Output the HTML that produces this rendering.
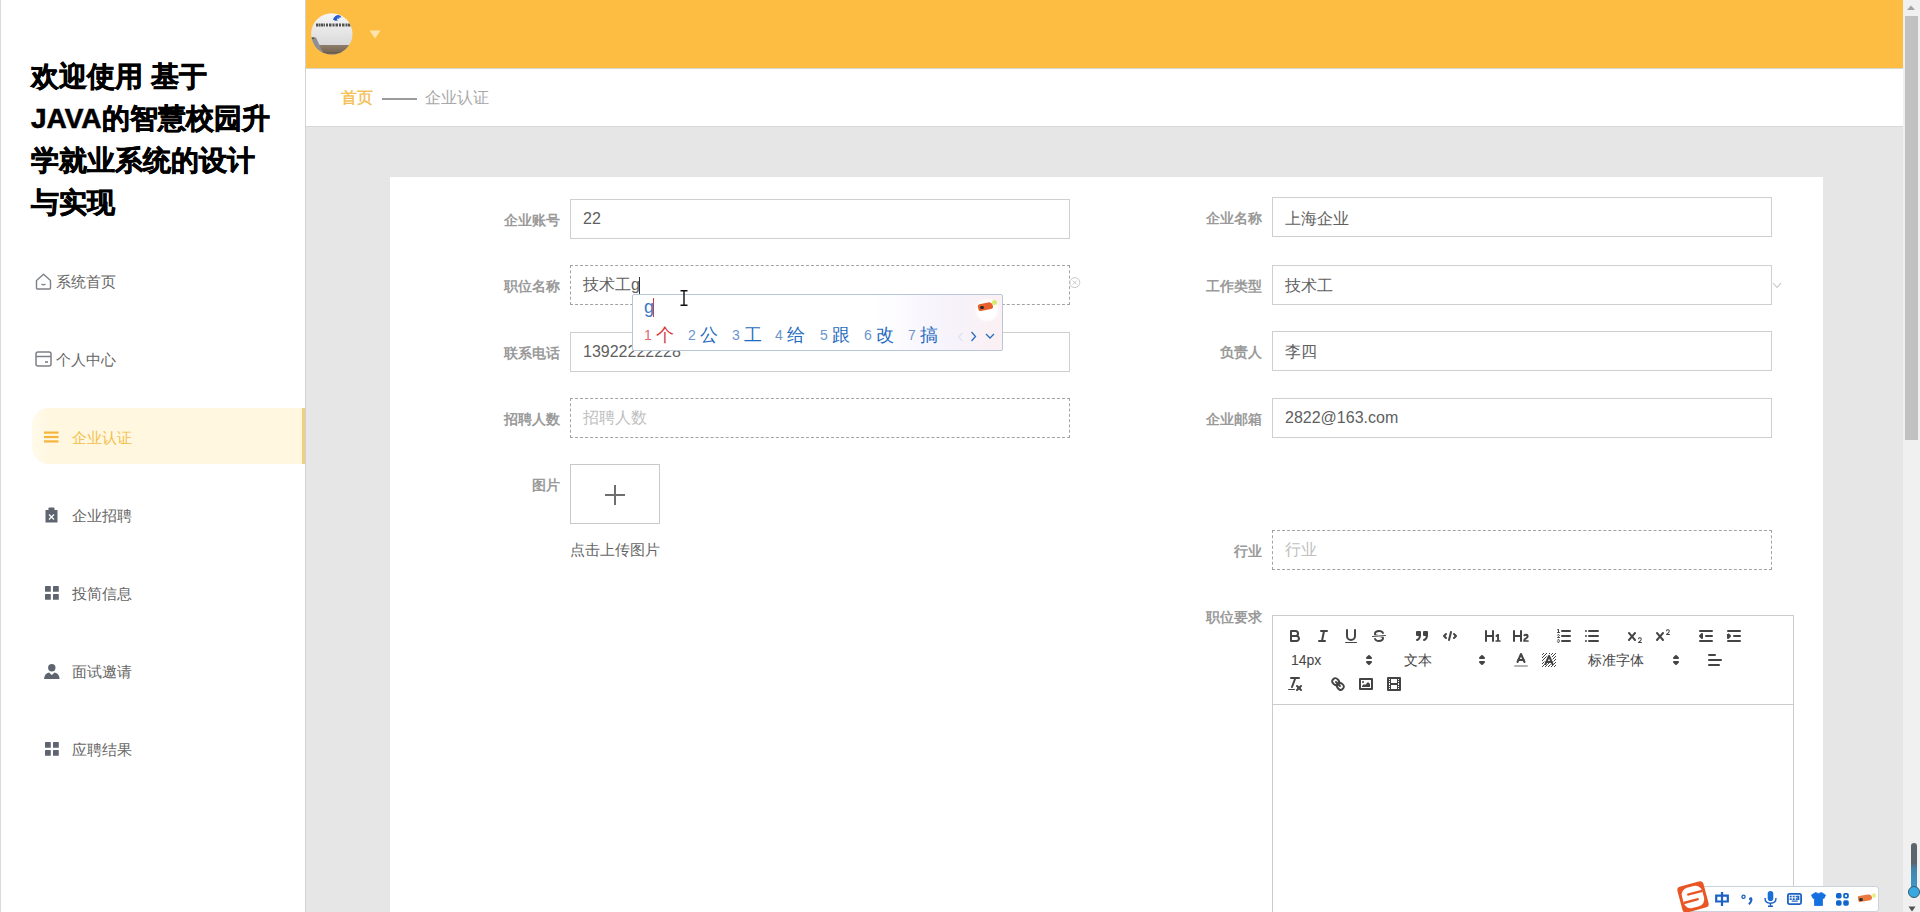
<!DOCTYPE html>
<html><head><meta charset="utf-8">
<style>
*{box-sizing:border-box;margin:0;padding:0}
html,body{width:1920px;height:912px;overflow:hidden;background:#fff;font-family:"Liberation Sans",sans-serif}
.abs{position:absolute}
#lb{left:0;top:0;width:1px;height:912px;background:#d9d9d9}
#side{left:1px;top:0;width:305px;height:912px;background:#fff;border-right:1px solid #d2d2d2}
#title{left:31px;top:55.5px;width:260px;font-size:28px;font-weight:bold;line-height:42px;color:#000;-webkit-text-stroke:0.6px #000}
.mi{position:absolute;left:32px;width:273px;height:57px;font-size:15px;color:#666}
.mi .t{position:absolute;top:0;line-height:57px}
#hdr{left:306px;top:0;width:1597px;height:69px;background:#fcbd42;border-bottom:1px solid #d9d6d0}
#bc{left:306px;top:69px;width:1597px;height:58px;background:#fff;border-bottom:1px solid #d8d8d8}
#main{left:306px;top:127px;width:1597px;height:785px;background:#e6e6e6}
#card{left:390px;top:177px;width:1433px;height:735px;background:#fff}
#sb{left:1903px;top:0;width:17px;height:912px;background:#f0f0f0}
.mt{position:absolute;font-size:15px;line-height:17px;color:#666;white-space:nowrap}
.mt.act{color:#f4bf4e}
#act{left:32px;top:408px;width:273px;height:56px;background:linear-gradient(90deg,#fffaeb 0px,#fff7df 18px);border-radius:17px 0 0 17px;border-right:3px solid #f0d07e}
#av{left:311px;top:13px;width:42px;height:42px;border-radius:50%;overflow:hidden}
.lab{position:absolute;width:100px;text-align:right;font-size:14px;line-height:16px;font-weight:bold;color:#9a9a9a;white-space:nowrap}
.inp{position:absolute;width:500px;height:40px;border:1px solid #cfcfcf;background:#fff}
.inp.dash{border:1px dashed #a3a3a3}
.inp span{position:absolute;left:12px;font-size:16px;line-height:18px;color:#606060;white-space:nowrap}
.inp span.ph{color:#c0c0c0}
#ed{left:1272px;top:615px;width:522px;height:310px;border:1px solid #ccc;background:#fff}
#ime{left:632px;top:294px;width:371px;height:57px;border:1px solid #b8c6da;border-radius:2px;background:linear-gradient(90deg,#fff 0%,#fff 65%,#f6f3fc 85%,#fbf0f2 100%);overflow:hidden}
.cand{white-space:nowrap;line-height:20px}
.cand i{font-style:normal;font-size:14px;position:relative;top:-1px;color:#6a95cc;display:inline-block;width:12px}
.cand b{font-weight:normal;font-size:18px;color:#1f6bc0}
.pk{position:absolute;font-size:14px;line-height:22px;color:#444;white-space:nowrap}
#sogou{left:1690px;top:886px;width:189px;height:26px;border:1px solid #c9d2dd;border-radius:0 3px 3px 0;background:#fff}
</style></head><body>
<div id="lb" class="abs"></div>
<div id="side" class="abs"></div>
<div id="title" class="abs">欢迎使用 基于<br>JAVA的智慧校园升<br>学就业系统的设计<br>与实现</div>

<div class="mt" style="left:56px;top:273px">系统首页</div>
<svg class="abs" style="left:35px;top:273px" width="17" height="17" viewBox="0 0 17 17"><path d="M1.5 7.5 L8.5 1.2 L15.5 7.5 V15 Q15.5 16 14.5 16 H2.5 Q1.5 16 1.5 15 Z" fill="none" stroke="#7d8087" stroke-width="1.4" stroke-linejoin="round"/><path d="M6.5 11 Q8.5 12.8 10.5 11" fill="none" stroke="#7d8087" stroke-width="1.3"/></svg>
<div class="mt" style="left:56px;top:351px">个人中心</div>
<svg class="abs" style="left:35px;top:351px" width="17" height="16" viewBox="0 0 17 16"><rect x="1" y="1" width="15" height="14" rx="2" fill="none" stroke="#7d8087" stroke-width="1.5"/><path d="M1 5.5 H16" stroke="#7d8087" stroke-width="1.5"/><path d="M10 11 H13" stroke="#7d8087" stroke-width="1.6"/></svg>
<div id="act" class="abs"></div>
<svg class="abs" style="left:44px;top:431px" width="15" height="12" viewBox="0 0 15 12"><rect x="0" y="0.5" width="14.5" height="2.2" fill="#f5b43c"/><rect x="0" y="4.9" width="14.5" height="2.2" fill="#f5b43c"/><rect x="0" y="9.3" width="14.5" height="2.2" fill="#f5b43c"/></svg>
<div class="mt act" style="left:72px;top:429px">企业认证</div>
<svg class="abs" style="left:45px;top:507px" width="13" height="16" viewBox="0 0 13 16"><path d="M0.5 3 H12.5 V15.5 H0.5 Z" fill="#5f6570"/><rect x="3.5" y="0.5" width="6" height="3" rx="0.8" fill="#5f6570"/><path d="M4 7.5 L9 12.5 M9 7.5 L4 12.5" stroke="#fff" stroke-width="1.2"/></svg>
<div class="mt" style="left:72px;top:507px">企业招聘</div>
<svg class="abs grid" style="left:45px;top:586px" width="14" height="14" viewBox="0 0 14 14"><rect x="0" y="0" width="5.8" height="5.8" rx="0.6" fill="#5f6570"/><rect x="8" y="0" width="5.8" height="5.8" rx="0.6" fill="#5f6570"/><rect x="0" y="8" width="5.8" height="5.8" rx="0.6" fill="#5f6570"/><rect x="8" y="8" width="5.8" height="5.8" rx="0.6" fill="#5f6570"/></svg>
<div class="mt" style="left:72px;top:585px">投简信息</div>
<svg class="abs" style="left:44px;top:664px" width="16" height="15" viewBox="0 0 16 15"><circle cx="7.8" cy="3.7" r="3.7" fill="#5f6570"/><path d="M0 15 Q0.5 9.5 5 8.6 L7.8 11 L10.6 8.6 Q15.2 9.5 15.6 15 Z" fill="#5f6570"/></svg>
<div class="mt" style="left:72px;top:663px">面试邀请</div>
<svg class="abs grid" style="left:45px;top:742px" width="14" height="14" viewBox="0 0 14 14"><rect x="0" y="0" width="5.8" height="5.8" rx="0.6" fill="#5f6570"/><rect x="8" y="0" width="5.8" height="5.8" rx="0.6" fill="#5f6570"/><rect x="0" y="8" width="5.8" height="5.8" rx="0.6" fill="#5f6570"/><rect x="8" y="8" width="5.8" height="5.8" rx="0.6" fill="#5f6570"/></svg>
<div class="mt" style="left:72px;top:741px">应聘结果</div>

<div id="hdr" class="abs"></div>
<svg class="abs" style="left:311px;top:13px" width="42" height="42" viewBox="0 0 42 42"><defs><clipPath id="avc"><circle cx="20.8" cy="20.9" r="20.7"/></clipPath><linearGradient id="avg" x1="0" y1="0" x2="0" y2="1"><stop offset="0" stop-color="#f6f6f6"/><stop offset="0.5" stop-color="#e4e4e4"/><stop offset="0.75" stop-color="#d9d9db"/></linearGradient><linearGradient id="avb" x1="0" y1="0" x2="0" y2="1"><stop offset="0" stop-color="#8e7d69"/><stop offset="1" stop-color="#6f5f4d"/></linearGradient></defs><g clip-path="url(#avc)"><rect width="42" height="42" fill="url(#avg)"/><rect x="0" y="32" width="42" height="10" fill="url(#avb)"/><rect x="0" y="39" width="42" height="1" fill="#5f5040" opacity=".5"/><path d="M0 25 L5 24.5 L13 42 L0 42 Z" fill="#8d8f93"/><path d="M0 24.5 L4 24.5 L2 26 Z" fill="#333"/><g fill="#2c2c2c" opacity=".8"><rect x="5" y="10.5" width="2" height="3"/><rect x="7.5" y="10.5" width="2" height="3"/><rect x="10" y="10.5" width="2" height="3"/><rect x="12.5" y="10.5" width="1.5" height="3"/><rect x="15" y="10.5" width="2" height="3"/><rect x="18" y="10.5" width="2.5" height="3"/><rect x="21.5" y="10.5" width="2" height="3"/><rect x="24.5" y="10.5" width="2.5" height="3"/><rect x="28" y="10.5" width="2" height="3"/><rect x="31" y="10.5" width="2.5" height="3"/><rect x="34.5" y="10.5" width="2" height="3"/><rect x="37" y="10.5" width="2.5" height="3"/></g><path d="M22 6.5 Q23.5 2.5 27 2 Q30 2.3 30.5 4.5 Q28 3.5 26 5.5 Q25.5 7.5 27.5 7.5 L24 7.8 Z" fill="#2457c8"/><circle cx="27.3" cy="4.6" r="1.3" fill="#3a70e0"/></g></svg><svg class="abs" style="left:369px;top:30px" width="12" height="9" viewBox="0 0 12 9"><path d="M0.5 0.5 H11.5 L6 8.5 Z" fill="#fde3ae"/></svg>
<div id="bc" class="abs"></div>
<div class="abs" style="left:341px;top:89px;font-size:16px;line-height:18px;color:#f4bd4e;-webkit-text-stroke:0.35px #f4bd4e">首页</div>
<div class="abs" style="left:382px;top:98px;width:35px;height:2px;background:#9b9b9b"></div>
<div class="abs" style="left:425px;top:89px;font-size:16px;line-height:18px;color:#a8a8a8">企业认证</div>

<div id="main" class="abs"></div>

<div id="card" class="abs"></div>
<!-- left column -->
<div class="lab" style="left:460px;top:212px">企业账号</div>
<div class="inp" style="left:570px;top:199px"><span style="top:10px">22</span></div>
<div class="lab" style="left:460px;top:278px">职位名称</div>
<div class="inp dash" style="left:570px;top:265px"><span style="top:10px">技术工g</span></div>
<div class="abs" style="left:639px;top:277px;width:1px;height:17px;background:#333"></div>
<svg class="abs" style="left:1069px;top:276px" width="12" height="13" viewBox="0 0 12 13"><circle cx="5.8" cy="6.6" r="5" fill="none" stroke="#c8c8c8" stroke-width="1"/><path d="M3.9 4.7 L7.7 8.5 M7.7 4.7 L3.9 8.5" stroke="#c8c8c8" stroke-width="1"/></svg>
<div class="lab" style="left:460px;top:345px">联系电话</div>
<div class="inp" style="left:570px;top:332px"><span style="top:10px">13922222228</span></div>
<div class="lab" style="left:460px;top:411px">招聘人数</div>
<div class="inp dash" style="left:570px;top:398px"><span class="ph" style="top:10px">招聘人数</span></div>
<div class="lab" style="left:460px;top:477px">图片</div>
<div class="abs" style="left:570px;top:464px;width:90px;height:60px;border:1px solid #c9c9c9;background:#fff"></div>
<div class="abs" style="left:605px;top:494px;width:20px;height:2px;background:#6f6f6f"></div>
<div class="abs" style="left:614px;top:485px;width:2px;height:20px;background:#6f6f6f"></div>
<div class="abs" style="left:570px;top:541px;font-size:15px;line-height:17px;color:#666">点击上传图片</div>

<div id="ime" class="abs">
 <div class="abs" style="left:11px;top:2px;font-size:18px;line-height:20px;color:#3a78c9">g</div>
 <div class="abs" style="left:20px;top:3px;width:1px;height:19px;background:#d9383a"></div>
 <div class="abs cand" style="left:11px;top:30px"><i style="color:#e06a6a">1</i><b style="color:#d9383a">个</b></div>
 <div class="abs cand" style="left:55px;top:30px"><i>2</i><b>公</b></div>
 <div class="abs cand" style="left:99px;top:30px"><i>3</i><b>工</b></div>
 <div class="abs cand" style="left:142px;top:30px"><i>4</i><b>给</b></div>
 <div class="abs cand" style="left:187px;top:30px"><i>5</i><b>跟</b></div>
 <div class="abs cand" style="left:231px;top:30px"><i>6</i><b>改</b></div>
 <div class="abs cand" style="left:275px;top:30px"><i>7</i><b>搞</b></div>
 <svg class="abs" style="left:324px;top:37px" width="7" height="10" viewBox="0 0 7 10"><path d="M5.5 1 L1.5 5 L5.5 9" fill="none" stroke="#dfe4ec" stroke-width="1.2"/></svg>
 <svg class="abs" style="left:337px;top:36px" width="7" height="11" viewBox="0 0 7 11"><path d="M1.5 1 L5.5 5.5 L1.5 10" fill="none" stroke="#2b6cc0" stroke-width="1.3"/></svg>
 <svg class="abs" style="left:352px;top:38px" width="10" height="7" viewBox="0 0 10 7"><path d="M1 1 L5 5 L9 1" fill="none" stroke="#2b6cc0" stroke-width="1.3"/></svg>
 <div class="abs" style="left:340px;top:3px;width:28px;height:24px;border-radius:50%;background:radial-gradient(circle,#fff 50%,rgba(255,255,255,0) 70%)"></div>
 <div class="abs" style="left:345px;top:8px;width:15px;height:7px;background:#e8602c;border-radius:3px 6px 4px 3px;transform:rotate(-12deg)"></div>
 <div class="abs" style="left:347px;top:11px;width:4px;height:3px;background:#2a2a2a;border-radius:2px"></div>
 <div class="abs" style="left:359px;top:5px;width:5px;height:5px;background:#d6ea6c;border-radius:50%"></div>
</div>
<svg class="abs" style="left:680px;top:290px" width="8" height="16" viewBox="0 0 8 16"><path d="M0.5 0.8 H7.5 M4 0.8 V15.2 M0.5 15.2 H7.5" fill="none" stroke="#111" stroke-width="1.4"/></svg>
<!-- right column -->
<div class="lab" style="left:1162px;top:210px">企业名称</div>
<div class="inp" style="left:1272px;top:197px"><span style="top:12px">上海企业</span></div>
<div class="lab" style="left:1162px;top:278px">工作类型</div>
<div class="inp" style="left:1272px;top:265px"><span style="top:11px">技术工</span></div>
<svg class="abs" style="left:1772px;top:282px" width="10" height="7" viewBox="0 0 10 7"><path d="M1 1 L5 5.5 L9 1" fill="none" stroke="#c4c4c4" stroke-width="1.1"/></svg>
<div class="lab" style="left:1162px;top:344px">负责人</div>
<div class="inp" style="left:1272px;top:331px"><span style="top:11px">李四</span></div>
<div class="lab" style="left:1162px;top:411px">企业邮箱</div>
<div class="inp" style="left:1272px;top:398px"><span style="top:10px">2822@163.com</span></div>
<div class="lab" style="left:1162px;top:543px">行业</div>
<div class="inp dash" style="left:1272px;top:530px"><span class="ph" style="top:10px">行业</span></div>
<div class="lab" style="left:1162px;top:609px">职位要求</div>
<div id="ed" class="abs"></div>
<svg class="abs" style="left:1286px;top:627px" width="18" height="18" viewBox="0 0 18 18"><path fill="none" stroke="#444" stroke-width="2" stroke-linecap="round" stroke-linejoin="round" d="M5,4H9.5A2.5,2.5,0,0,1,12,6.5v0A2.5,2.5,0,0,1,9.5,9H5A0,0,0,0,1,5,9V4A0,0,0,0,1,5,4Z"/><path fill="none" stroke="#444" stroke-width="2" stroke-linecap="round" stroke-linejoin="round" d="M5,9h5.5A2.5,2.5,0,0,1,13,11.5v0A2.5,2.5,0,0,1,10.5,14H5a0,0,0,0,1,0,0V9A0,0,0,0,1,5,9Z"/></svg>
<svg class="abs" style="left:1314px;top:627px" width="18" height="18" viewBox="0 0 18 18"><line fill="none" stroke="#444" stroke-width="2" stroke-linecap="round" stroke-linejoin="round" x1="7" x2="13" y1="4" y2="4"/><line fill="none" stroke="#444" stroke-width="2" stroke-linecap="round" stroke-linejoin="round" x1="5" x2="11" y1="14" y2="14"/><line fill="none" stroke="#444" stroke-width="2" stroke-linecap="round" stroke-linejoin="round" x1="8" x2="10" y1="14" y2="4"/></svg>
<svg class="abs" style="left:1342px;top:627px" width="18" height="18" viewBox="0 0 18 18"><path fill="none" stroke="#444" stroke-width="2" stroke-linecap="round" stroke-linejoin="round" d="M5,3V9a4.012,4.012,0,0,0,4,4H9a4.012,4.012,0,0,0,4-4V3"/><rect fill="#444" height="1" rx="0.5" ry="0.5" width="12" x="3" y="15"/></svg>
<svg class="abs" style="left:1370px;top:627px" width="18" height="18" viewBox="0 0 18 18"><line fill="none" stroke="#444" stroke-width="1" stroke-linecap="round" stroke-linejoin="round" x1="15.5" x2="2.5" y1="8.5" y2="9.5"/><path fill="#444" d="M9.007,8C6.542,7.791,6,7.519,6,6.5,6,5.792,7.283,5,9,5c1.571,0,2.765.679,2.969,1.309a1,1,0,0,0,1.9-.617C13.356,4.106,11.354,3,9,3,6.2,3,4,4.538,4,6.5a3.2,3.2,0,0,0,.5,1.843Z"/><path fill="#444" d="M8.984,10C11.457,10.208,12,10.479,12,11.5c0,0.708-1.283,1.5-3,1.5-1.571,0-2.765-.679-2.969-1.309a1,1,0,1,0-1.9.617C4.644,13.894,6.646,15,9,15c2.8,0,5-1.538,5-3.5a3.2,3.2,0,0,0-.5-1.843Z"/></svg>
<svg class="abs" style="left:1413px;top:627px" width="18" height="18" viewBox="0 0 18 18"><rect fill="#444" stroke="#444" stroke-width="2" stroke-linejoin="round" height="3" width="3" x="4" y="5"/><rect fill="#444" stroke="#444" stroke-width="2" stroke-linejoin="round" height="3" width="3" x="11" y="5"/><path fill="none" stroke="#444" stroke-width="2" stroke-linecap="round" d="M7,8c0,4.031-3,5-3,5"/><path fill="none" stroke="#444" stroke-width="2" stroke-linecap="round" d="M14,8c0,4.031-3,5-3,5"/></svg>
<svg class="abs" style="left:1441px;top:627px" width="18" height="18" viewBox="0 0 18 18"><polyline fill="none" stroke="#444" stroke-width="2" stroke-linecap="round" stroke-linejoin="round" points="5 7 3 9 5 11"/><polyline fill="none" stroke="#444" stroke-width="2" stroke-linecap="round" stroke-linejoin="round" points="13 7 15 9 13 11"/><line fill="none" stroke="#444" stroke-width="2" stroke-linecap="round" stroke-linejoin="round" x1="10" x2="8" y1="5" y2="13"/></svg>
<svg class="abs" style="left:1484px;top:627px" width="18" height="18" viewBox="0 0 18 18"><path fill="#444" d="M10,4V14a1,1,0,0,1-2,0V10H3v4a1,1,0,0,1-2,0V4A1,1,0,0,1,3,4V8H8V4a1,1,0,0,1,2,0Zm6.06787,9.209H14.98975V7.59863a.54085.54085,0,0,0-.605-.60547h-.62744a1.01119,1.01119,0,0,0-.748.29688L11.645,8.56641a.5435.5435,0,0,0-.022.8584l.28613.30762a.53861.53861,0,0,0,.84717.0332l.09912-.08789a1.2137,1.2137,0,0,0,.2417-.35254h.02246s-.01123.30859-.01123.60547V13.209H12.041a.54085.54085,0,0,0-.605.60547v.43945a.54085.54085,0,0,0,.605.60547h4.02686a.54085.54085,0,0,0,.605-.60547v-.43945A.54085.54085,0,0,0,16.06787,13.209Z"/></svg>
<svg class="abs" style="left:1512px;top:627px" width="18" height="18" viewBox="0 0 18 18"><path fill="#444" d="M16.73975,13.81445v.43945a.54085.54085,0,0,1-.605.60547H11.855a.58392.58392,0,0,1-.64893-.60547V14.0127c0-2.90527,3.39941-3.42187,3.39941-4.55469a.77675.77675,0,0,0-.84717-.78125,1.17684,1.17684,0,0,0-.83594.38477c-.2749.26367-.561.374-.85791.13184l-.4292-.34082c-.30811-.24219-.38525-.51758-.1543-.81445a2.97155,2.97155,0,0,1,2.45361-1.17676,2.45393,2.45393,0,0,1,2.68408,2.40918c0,2.45312-3.1792,2.92676-3.27832,3.93848h2.79443A.54085.54085,0,0,1,16.73975,13.81445ZM9,3A.99974.99974,0,0,0,8,4V8H3V4A1,1,0,0,0,1,4V14a1,1,0,0,0,2,0V10H8v4a1,1,0,0,0,2,0V4A.99974.99974,0,0,0,9,3Z"/></svg>
<svg class="abs" style="left:1555px;top:627px" width="18" height="18" viewBox="0 0 18 18"><line fill="none" stroke="#444" stroke-width="2" stroke-linecap="round" stroke-linejoin="round" x1="7" x2="15" y1="4" y2="4"/><line fill="none" stroke="#444" stroke-width="2" stroke-linecap="round" stroke-linejoin="round" x1="7" x2="15" y1="9" y2="9"/><line fill="none" stroke="#444" stroke-width="2" stroke-linecap="round" stroke-linejoin="round" x1="7" x2="15" y1="14" y2="14"/><line fill="none" stroke="#444" stroke-width="1" stroke-linecap="round" stroke-linejoin="round" x1="2.5" x2="4.5" y1="5.5" y2="5.5"/><path fill="#444" d="M3.5,6A0.5,0.5,0,0,1,3,5.5V3.085l-0.276.138A0.5,0.5,0,0,1,2.053,3c-0.124-.247-0.023-0.324.224-0.447l1-.5A0.5,0.5,0,0,1,4,2.5v3A0.5,0.5,0,0,1,3.5,6Z"/><path fill="none" stroke="#444" stroke-width="1" stroke-linecap="round" stroke-linejoin="round" d="M4.5,10.5h-2c0-.234,1.85-1.076,1.85-2.234A0.959,0.959,0,0,0,2.5,8.156"/><path fill="none" stroke="#444" stroke-width="1" stroke-linecap="round" stroke-linejoin="round" d="M2.5,14.846a0.959,0.959,0,0,0,1.85-.109A0.7,0.7,0,0,0,3.75,14a0.688,0.688,0,0,0,.6-0.736,0.959,0.959,0,0,0-1.85-.109"/></svg>
<svg class="abs" style="left:1583px;top:627px" width="18" height="18" viewBox="0 0 18 18"><line fill="none" stroke="#444" stroke-width="2" stroke-linecap="round" stroke-linejoin="round" x1="6" x2="15" y1="4" y2="4"/><line fill="none" stroke="#444" stroke-width="2" stroke-linecap="round" stroke-linejoin="round" x1="6" x2="15" y1="9" y2="9"/><line fill="none" stroke="#444" stroke-width="2" stroke-linecap="round" stroke-linejoin="round" x1="6" x2="15" y1="14" y2="14"/><line fill="none" stroke="#444" stroke-width="2" stroke-linecap="round" stroke-linejoin="round" x1="3" x2="3" y1="4" y2="4"/><line fill="none" stroke="#444" stroke-width="2" stroke-linecap="round" stroke-linejoin="round" x1="3" x2="3" y1="9" y2="9"/><line fill="none" stroke="#444" stroke-width="2" stroke-linecap="round" stroke-linejoin="round" x1="3" x2="3" y1="14" y2="14"/></svg>
<svg class="abs" style="left:1626px;top:627px" width="18" height="18" viewBox="0 0 18 18"><path fill="#444" d="M15.5,15H13.861a3.858,3.858,0,0,0,1.914-2.975,1.8,1.8,0,0,0-1.6-1.751A1.921,1.921,0,0,0,12.021,11.7a0.50013,0.50013,0,1,0,.957.291h0a0.914,0.914,0,0,1,1.053-.725,0.81,0.81,0,0,1,.744.762c0,1.076-1.16971,1.86982-1.93971,2.43082A1.45639,1.45639,0,0,0,12,15.5a0.5,0.5,0,0,0,.5.5h3A0.5,0.5,0,0,0,15.5,15Z"/><path fill="#444" d="M9.65,5.241a1,1,0,0,0-1.409.108L6,7.964,3.759,5.349A1,1,0,0,0,2.192,6.59178Q2.21541,6.6213,2.241,6.649L4.684,9.5,2.241,12.35A1,1,0,0,0,3.71,13.70722q0.02557-.02768.049-0.05722L6,11.036,8.241,13.65a1,1,0,1,0,1.567-1.24277Q9.78459,12.3777,9.759,12.35L7.316,9.5,9.759,6.651A1,1,0,0,0,9.65,5.241Z"/></svg>
<svg class="abs" style="left:1654px;top:627px" width="18" height="18" viewBox="0 0 18 18"><path fill="#444" d="M15.5,7H13.861a4.015,4.015,0,0,0,1.914-2.975,1.8,1.8,0,0,0-1.6-1.751A1.922,1.922,0,0,0,12.021,3.7a0.5,0.5,0,1,0,.957.291,0.917,0.917,0,0,1,1.053-.725,0.81,0.81,0,0,1,.744.762c0,1.077-1.164,1.925-1.934,2.486A1.423,1.423,0,0,0,12,7.5a0.5,0.5,0,0,0,.5.5h3A0.5,0.5,0,0,0,15.5,7Z"/><path fill="#444" d="M9.651,5.241a1,1,0,0,0-1.41.108L6,7.964,3.759,5.349a1,1,0,1,0-1.519,1.3L4.683,9.5,2.241,12.35a1,1,0,1,0,1.519,1.3L6,11.036,8.241,13.65a1,1,0,0,0,1.519-1.3L7.317,9.5,9.759,6.651A1,1,0,0,0,9.651,5.241Z"/></svg>
<svg class="abs" style="left:1697px;top:627px" width="18" height="18" viewBox="0 0 18 18"><line fill="none" stroke="#444" stroke-width="2" stroke-linecap="round" stroke-linejoin="round" x1="3" x2="15" y1="14" y2="14"/><line fill="none" stroke="#444" stroke-width="2" stroke-linecap="round" stroke-linejoin="round" x1="3" x2="15" y1="4" y2="4"/><line fill="none" stroke="#444" stroke-width="2" stroke-linecap="round" stroke-linejoin="round" x1="9" x2="15" y1="9" y2="9"/><polyline fill="none" stroke="#444" stroke-width="2" stroke-linecap="round" stroke-linejoin="round" points="5 7 5 11 3 9 5 7"/></svg>
<svg class="abs" style="left:1725px;top:627px" width="18" height="18" viewBox="0 0 18 18"><line fill="none" stroke="#444" stroke-width="2" stroke-linecap="round" stroke-linejoin="round" x1="3" x2="15" y1="14" y2="14"/><line fill="none" stroke="#444" stroke-width="2" stroke-linecap="round" stroke-linejoin="round" x1="3" x2="15" y1="4" y2="4"/><line fill="none" stroke="#444" stroke-width="2" stroke-linecap="round" stroke-linejoin="round" x1="9" x2="15" y1="9" y2="9"/><polyline fill="#444" stroke="#444" stroke-width="2" stroke-linejoin="round" points="3 7 3 11 5 9 3 7"/></svg>
<svg class="abs" style="left:1360px;top:651px" width="18" height="18" viewBox="0 0 18 18"><polygon fill="none" stroke="#444" stroke-width="2" stroke-linejoin="round" points="7 11 9 13 11 11 7 11"/><polygon fill="none" stroke="#444" stroke-width="2" stroke-linejoin="round" points="7 7 9 5 11 7 7 7"/></svg>
<svg class="abs" style="left:1473px;top:651px" width="18" height="18" viewBox="0 0 18 18"><polygon fill="none" stroke="#444" stroke-width="2" stroke-linejoin="round" points="7 11 9 13 11 11 7 11"/><polygon fill="none" stroke="#444" stroke-width="2" stroke-linejoin="round" points="7 7 9 5 11 7 7 7"/></svg>
<svg class="abs" style="left:1512px;top:651px" width="18" height="18" viewBox="0 0 18 18"><line fill="none" stroke="#444" stroke-width="2" stroke-linecap="round" opacity="0.4" x1="3" x2="15" y1="15" y2="15"/><polyline fill="none" stroke="#444" stroke-width="2" stroke-linecap="round" stroke-linejoin="round" points="5.5 11 9 3 12.5 11"/><line fill="none" stroke="#444" stroke-width="2" stroke-linecap="round" stroke-linejoin="round" x1="11.63" x2="6.38" y1="9" y2="9"/></svg>
<svg class="abs" style="left:1540px;top:651px" width="18" height="18" viewBox="0 0 18 18"><g fill="#444"><rect x="2" y="3" width="1" height="1"/><rect x="2" y="6" width="1" height="1"/><rect x="2" y="9" width="1" height="1"/><rect x="2" y="12" width="1" height="1"/><rect x="2" y="15" width="1" height="1"/><rect x="3" y="2" width="1" height="1"/><rect x="3" y="5" width="1" height="1"/><rect x="3" y="8" width="1" height="1"/><rect x="3" y="11" width="1" height="1"/><rect x="3" y="14" width="1" height="1"/><rect x="4" y="4" width="1" height="1"/><rect x="4" y="7" width="1" height="1"/><rect x="4" y="10" width="1" height="1"/><rect x="4" y="13" width="1" height="1"/><rect x="5" y="3" width="1" height="1"/><rect x="5" y="6" width="1" height="1"/><rect x="5" y="9" width="1" height="1"/><rect x="5" y="12" width="1" height="1"/><rect x="5" y="15" width="1" height="1"/><rect x="6" y="2" width="1" height="1"/><rect x="6" y="5" width="1" height="1"/><rect x="6" y="8" width="1" height="1"/><rect x="6" y="11" width="1" height="1"/><rect x="6" y="14" width="1" height="1"/><rect x="7" y="4" width="1" height="1"/><rect x="7" y="7" width="1" height="1"/><rect x="7" y="10" width="1" height="1"/><rect x="7" y="13" width="1" height="1"/><rect x="8" y="3" width="1" height="1"/><rect x="8" y="6" width="1" height="1"/><rect x="8" y="9" width="1" height="1"/><rect x="8" y="12" width="1" height="1"/><rect x="8" y="15" width="1" height="1"/><rect x="9" y="2" width="1" height="1"/><rect x="9" y="5" width="1" height="1"/><rect x="9" y="8" width="1" height="1"/><rect x="9" y="11" width="1" height="1"/><rect x="9" y="14" width="1" height="1"/><rect x="10" y="4" width="1" height="1"/><rect x="10" y="7" width="1" height="1"/><rect x="10" y="10" width="1" height="1"/><rect x="10" y="13" width="1" height="1"/><rect x="11" y="3" width="1" height="1"/><rect x="11" y="6" width="1" height="1"/><rect x="11" y="9" width="1" height="1"/><rect x="11" y="12" width="1" height="1"/><rect x="11" y="15" width="1" height="1"/><rect x="12" y="2" width="1" height="1"/><rect x="12" y="5" width="1" height="1"/><rect x="12" y="8" width="1" height="1"/><rect x="12" y="11" width="1" height="1"/><rect x="12" y="14" width="1" height="1"/><rect x="13" y="4" width="1" height="1"/><rect x="13" y="7" width="1" height="1"/><rect x="13" y="10" width="1" height="1"/><rect x="13" y="13" width="1" height="1"/><rect x="14" y="3" width="1" height="1"/><rect x="14" y="6" width="1" height="1"/><rect x="14" y="9" width="1" height="1"/><rect x="14" y="12" width="1" height="1"/><rect x="14" y="15" width="1" height="1"/><rect x="15" y="2" width="1" height="1"/><rect x="15" y="5" width="1" height="1"/><rect x="15" y="8" width="1" height="1"/><rect x="15" y="11" width="1" height="1"/><rect x="15" y="14" width="1" height="1"/></g><polyline fill="none" stroke="#fff" stroke-width="4" stroke-linejoin="round" points="5.5 13 9 5 12.5 13"/><polyline fill="none" stroke="#444" stroke-width="2" stroke-linecap="round" stroke-linejoin="round" points="5.5 13 9 5 12.5 13"/><line fill="none" stroke="#444" stroke-width="2" stroke-linecap="round" stroke-linejoin="round" x1="11.63" x2="6.38" y1="11" y2="11"/></svg>
<svg class="abs" style="left:1667px;top:651px" width="18" height="18" viewBox="0 0 18 18"><polygon fill="none" stroke="#444" stroke-width="2" stroke-linejoin="round" points="7 11 9 13 11 11 7 11"/><polygon fill="none" stroke="#444" stroke-width="2" stroke-linejoin="round" points="7 7 9 5 11 7 7 7"/></svg>
<svg class="abs" style="left:1706px;top:651px" width="18" height="18" viewBox="0 0 18 18"><line fill="none" stroke="#444" stroke-width="2" stroke-linecap="round" stroke-linejoin="round" x1="3" x2="15" y1="9" y2="9"/><line fill="none" stroke="#444" stroke-width="2" stroke-linecap="round" stroke-linejoin="round" x1="3" x2="13" y1="14" y2="14"/><line fill="none" stroke="#444" stroke-width="2" stroke-linecap="round" stroke-linejoin="round" x1="3" x2="9" y1="4" y2="4"/></svg>
<div class="pk" style="left:1291px;top:649px">14px</div>
<div class="pk" style="left:1403.5px;top:649px">文本</div>
<div class="pk" style="left:1587.5px;top:649px">标准字体</div>
<svg class="abs" style="left:1286px;top:675px" width="18" height="18" viewBox="0 0 18 18"><line fill="none" stroke="#444" stroke-width="2" stroke-linecap="round" stroke-linejoin="round" x1="5" x2="13" y1="3" y2="3"/><line fill="none" stroke="#444" stroke-width="2" stroke-linecap="round" stroke-linejoin="round" x1="6" x2="9.35" y1="12" y2="3"/><line fill="none" stroke="#444" stroke-width="2" stroke-linecap="round" stroke-linejoin="round" x1="11" x2="15" y1="11" y2="15"/><line fill="none" stroke="#444" stroke-width="2" stroke-linecap="round" stroke-linejoin="round" x1="15" x2="11" y1="11" y2="15"/><rect fill="#444" height="1" rx="0.5" ry="0.5" width="7" x="2" y="14"/></svg>
<svg class="abs" style="left:1329px;top:675px" width="18" height="18" viewBox="0 0 18 18"><line fill="none" stroke="#444" stroke-width="2" stroke-linecap="round" stroke-linejoin="round" x1="7" x2="11" y1="7" y2="11"/><path fill="none" stroke="#444" stroke-width="2" stroke-linecap="round" stroke-linejoin="round" d="M8.9,4.577a3.476,3.476,0,0,1,.36,4.679A3.476,3.476,0,0,1,4.577,8.9C3.185,7.5,2.035,6.4,4.217,4.217S7.5,3.185,8.9,4.577Z"/><path fill="none" stroke="#444" stroke-width="2" stroke-linecap="round" stroke-linejoin="round" d="M13.423,9.1a3.476,3.476,0,0,0-4.679-.36,3.476,3.476,0,0,0,.36,4.679c1.392,1.392,2.5,2.542,4.679.36S14.815,10.5,13.423,9.1Z"/></svg>
<svg class="abs" style="left:1357px;top:675px" width="18" height="18" viewBox="0 0 18 18"><rect fill="none" stroke="#444" stroke-width="2" stroke-linecap="round" stroke-linejoin="round" height="10" width="12" x="3" y="4"/><circle fill="#444" cx="6" cy="7" r="1"/><polyline fill="#444" points="5 12 5 11 7 9 8 10 11 7 13 9 13 12 5 12"/></svg>
<svg class="abs" style="left:1385px;top:675px" width="18" height="18" viewBox="0 0 18 18"><rect fill="none" stroke="#444" stroke-width="2" stroke-linecap="round" stroke-linejoin="round" height="12" width="12" x="3" y="3"/><rect fill="#444" height="12" width="1" x="5" y="3"/><rect fill="#444" height="12" width="1" x="12" y="3"/><rect fill="#444" height="2" width="8" x="5" y="8"/><rect fill="#444" height="1" width="3" x="3" y="5"/><rect fill="#444" height="1" width="3" x="3" y="7"/><rect fill="#444" height="1" width="3" x="3" y="10"/><rect fill="#444" height="1" width="3" x="3" y="12"/><rect fill="#444" height="1" width="3" x="12" y="5"/><rect fill="#444" height="1" width="3" x="12" y="7"/><rect fill="#444" height="1" width="3" x="12" y="10"/><rect fill="#444" height="1" width="3" x="12" y="12"/></svg>
<div class="abs" style="left:1273px;top:704px;width:520px;height:1px;background:#ccc"></div>


<div id="sogou" class="abs"></div>
<svg class="abs" style="left:1674px;top:879px" width="38" height="34" viewBox="0 0 38 34"><g transform="rotate(-15 19 18)"><rect x="5.5" y="4.5" width="27" height="27" rx="4" fill="#ea5526"/><rect x="8.5" y="7.5" width="21" height="21" rx="7" fill="#fff"/><path d="M29.5 13.2 H15.5 Q13.8 13.2 13.8 14.4 Q13.8 15.6 15.5 15.6 H29.5 Z" fill="#ea5526"/><path d="M8.5 20.2 H22.5 Q24.2 20.2 24.2 21.4 Q24.2 22.6 22.5 22.6 H8.5 Z" fill="#ea5526"/></g></svg>
<svg class="abs" style="left:1715px;top:892px" width="14" height="14" viewBox="0 0 14 14"><path d="M1.2 3.6 H12.8 V9.5 H1.2 Z" fill="none" stroke="#1b62c2" stroke-width="2.2"/><path d="M7 0 V14" stroke="#1b62c2" stroke-width="2.2"/></svg>
<svg class="abs" style="left:1741px;top:894px" width="12" height="11" viewBox="0 0 12 11"><circle cx="2.5" cy="2.8" r="1.6" fill="none" stroke="#1b62c2" stroke-width="1.3"/><path d="M9.5 4 Q10.8 4.2 10.3 6.5 Q9.7 8.8 7.8 10.2" fill="none" stroke="#1b62c2" stroke-width="2"/><circle cx="9.4" cy="5" r="1.4" fill="#1b62c2"/></svg>
<svg class="abs" style="left:1764px;top:891px" width="13" height="16" viewBox="0 0 13 16"><rect x="3.7" y="0" width="5.6" height="10" rx="2.8" fill="#1970d4"/><path d="M1 7 Q1 12.2 6.5 12.2 Q12 12.2 12 7" fill="none" stroke="#1b62c2" stroke-width="1.4"/><path d="M6.5 12.2 V15 M4 15.2 H9" stroke="#1b62c2" stroke-width="1.4"/></svg>
<svg class="abs" style="left:1787px;top:893px" width="15" height="12" viewBox="0 0 15 12"><rect x="0.9" y="0.9" width="13.2" height="10.2" rx="1.5" fill="none" stroke="#1b62c2" stroke-width="1.8"/><g fill="#1b62c2"><rect x="2.7" y="2.7" width="2" height="1.7"/><rect x="5.7" y="2.7" width="2" height="1.7"/><rect x="8.7" y="2.7" width="2" height="1.7"/><rect x="2.7" y="5.3" width="2" height="1.7"/><rect x="5.7" y="5.3" width="2" height="1.7"/><rect x="8.7" y="5.3" width="2" height="1.7"/><rect x="10.5" y="2.7" width="1.8" height="4.3"/><rect x="4.7" y="7.5" width="6" height="1.2"/></g></svg>
<svg class="abs" style="left:1811px;top:892px" width="15" height="14" viewBox="0 0 15 14"><path d="M4.5 0.5 Q7.5 2.5 10.5 0.5 L14.5 3 L13 6.5 L11.5 6 V13.5 H3.5 V6 L2 6.5 L0.5 3 Z" fill="#1570e0" stroke="#1570e0" stroke-width="0.8" stroke-linejoin="round"/></svg>
<svg class="abs" style="left:1836px;top:893px" width="13" height="13" viewBox="0 0 13 13"><g fill="#1066cc"><rect x="0" y="0" width="5.6" height="5.6" rx="1.8"/><rect x="7.2" y="0" width="5.6" height="5.6" rx="1.8"/><rect x="0" y="7.2" width="5.6" height="5.6" rx="1.8"/><rect x="7.2" y="7.2" width="5.6" height="5.6" rx="1.8"/></g><rect x="9" y="1.8" width="2" height="2" fill="#fff"/></svg>
<div class="abs" style="left:1858px;top:895px;width:14px;height:6px;background:#ea7a40;border-radius:2px 5px 3px 2px;transform:rotate(-10deg)"></div>
<div class="abs" style="left:1859px;top:898px;width:4px;height:3px;background:#333;border-radius:2px"></div>
<div class="abs" style="left:1872px;top:893px;width:4px;height:5px;background:#e8ef8a;border-radius:50%"></div>
<div id="sb" class="abs"></div>
<div class="abs" style="left:1905px;top:16px;width:13px;height:424px;background:#c1c1c1"></div>
<svg class="abs" style="left:1906px;top:4px" width="10" height="7" viewBox="0 0 10 7"><path d="M1 6 L5 1.5 L9 6 Z" fill="#a3a3a3"/></svg>
<svg class="abs" style="left:1907px;top:905px" width="10" height="8" viewBox="0 0 10 8"><path d="M1.5 1.5 H8.5 L5 6.5 Z" fill="#505050"/></svg>
<div class="abs" style="left:1908px;top:843px;width:12px;height:56px">
 <div class="abs" style="left:3px;top:0;width:6px;height:48px;border-radius:3px;background:linear-gradient(180deg,#5d656c 0%,#5d656c 42%,#4780a6 52%,#3a9fd2 100%)"></div>
 <div class="abs" style="left:0;top:43px;width:12px;height:12px;border-radius:50%;background:#38a9e0;border:1.5px solid #3c5a6e"></div>
</div>

</body></html>
